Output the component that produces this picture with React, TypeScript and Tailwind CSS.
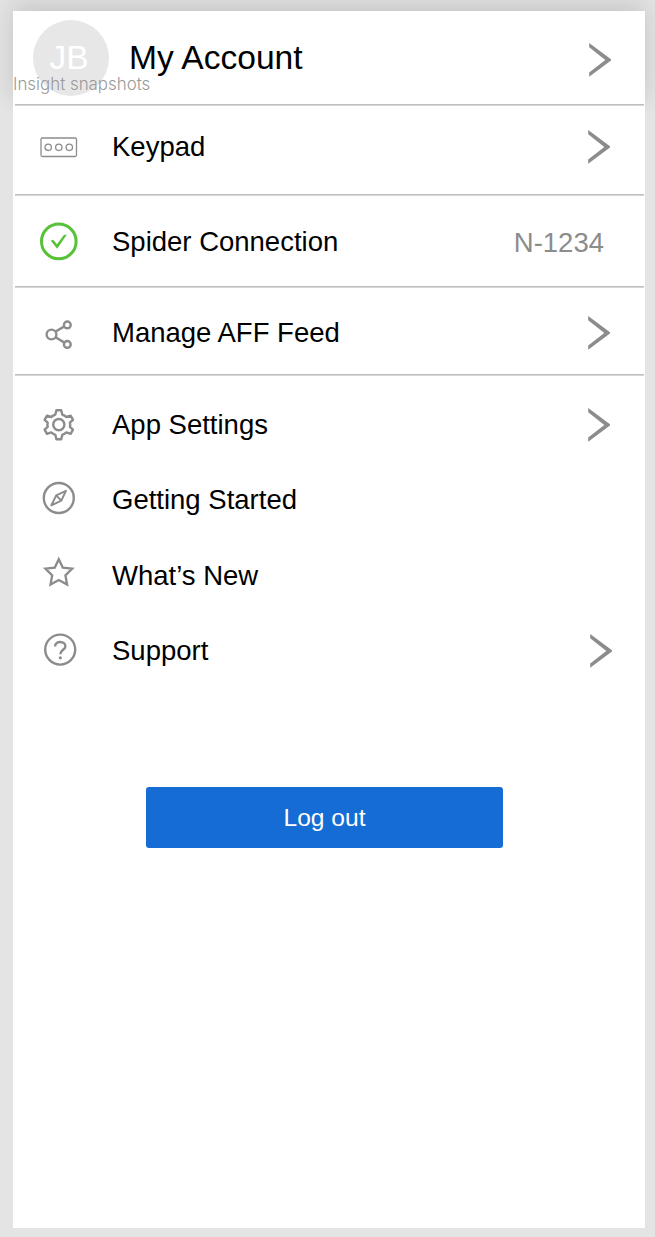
import React from 'react'

const stroke = '#8c8c8c'

function Chevron() {
  return (
    <svg width="24" height="36" viewBox="0 0 24 36" fill="none" className="shrink-0">
      <path d="M1.2 1L23 17.3V18.5L1.2 34.8V30.5L17.3 17.9L1.2 5.3Z" fill={stroke} />
    </svg>
  )
}

function Icon({ children }: { children: React.ReactNode }) {
  return (
    <svg
      width="40"
      height="40"
      viewBox="0 0 40 40"
      fill="none"
      stroke={stroke}
      strokeWidth="2.4"
      className="shrink-0"
    >
      {children}
    </svg>
  )
}

const icons = {
  keypad: (
    <Icon>
      <rect x="2" y="11" width="35.5" height="18.5" rx="1.5" strokeWidth="1.3" />
      <circle cx="9.2" cy="20.3" r="3.2" strokeWidth="1.3" />
      <circle cx="19.8" cy="20.3" r="3.2" strokeWidth="1.3" />
      <circle cx="30.3" cy="20.3" r="3.2" strokeWidth="1.3" />
    </Icon>
  ),
  check: (
    <Icon>
      <circle cx="19.8" cy="20.4" r="17.3" stroke="#57c138" strokeWidth="3" />
      <path d="M11.6 19.4L14.4 18.9L18 23.2L24.8 13.9L27.9 13.6L18.2 27.8Z" fill="#57c138" stroke="none" />
    </Icon>
  ),
  share: (
    <Icon>
      <circle cx="12.5" cy="20.5" r="4.9" />
      <circle cx="28.3" cy="10.9" r="3.4" />
      <circle cx="28.3" cy="30.4" r="3.4" />
      <path d="M16.6 17.5L25.4 12.4M16.6 23.3L25.4 28.6" />
    </Icon>
  ),
  gear: (
    <Icon>
      <circle cx="19.8" cy="19.6" r="5.6" />
      <path
        d="M17.4 5.2H22.2L23.3 9.6Q25.6 10.4 27.4 12L31.6 10.6L34 14.8L30.9 17.6Q31.5 19.6 30.9 21.8L34 24.6L31.6 28.8L27.4 27.4Q25.6 29 23.3 29.8L22.2 34.2H17.4L16.3 29.8Q14 29 12.2 27.4L8 28.8L5.6 24.6L8.7 21.8Q8.1 19.6 8.7 17.6L5.6 14.8L8 10.6L12.2 12Q14 10.4 16.3 9.6Z"
        strokeLinejoin="round"
      />
    </Icon>
  ),
  compass: (
    <Icon>
      <circle cx="19.8" cy="20" r="15" />
      <path d="M26.9 12.9L22.3 22.6L12.4 27.3L17.2 17.4Z" strokeWidth="2" strokeLinejoin="round" />
      <path d="M17.2 17.4L22.3 22.6" strokeWidth="2" />
    </Icon>
  ),
  star: (
    <Icon>
      <path
        d="M19.8 6.2L23.8 14.6L33.2 15.7L26.4 22.3L28.1 31.6L19.8 27L11.5 31.6L13.2 22.3L6.4 15.7L15.8 14.6Z"
        strokeWidth="2.3"
      />
    </Icon>
  ),
  help: (
    <Icon>
      <circle cx="21.2" cy="19.6" r="15" />
      <path d="M16.1 16.4C16.1 13.6 18.3 12 21.2 12C24.2 12 26.4 13.8 26.4 16.4C26.4 19.7 21.3 20 21.3 24.2" />
      <circle cx="21.3" cy="27.8" r="1.6" fill={stroke} stroke="none" />
    </Icon>
  ),
}

type RowProps = {
  icon: React.ReactNode
  label: string
  className: string
  iconClass?: string
  end?: React.ReactNode
}

function Row({ icon, label, className, iconClass = '', end }: RowProps) {
  return (
    <div className={`flex items-center pl-[26px] ${className}`}>
      <div className={iconClass}>{icon}</div>
      <span className="ml-[33px] flex-1 text-[27.5px] leading-8 whitespace-nowrap">{label}</span>
      {end}
    </div>
  )
}

function Divider() {
  return <div className="ml-[2px] mr-[1px] h-[2px] border-t border-b border-t-[#bfbfbf] border-b-[#d6d6d6]" />
}

export default function App() {
  return (
    <div className="h-[1237px] w-[655px] overflow-hidden bg-[#e4e4e4] pt-[11px] pl-[13px] font-['Liberation_Sans',Arial,sans-serif] text-black">
      <div className="flex h-[1217px] w-[632px] flex-col">
        {/* Account header */}
        <header className="relative flex h-[93px] shrink-0 items-center bg-white pr-[33px] pl-5 shadow-[0_-6px_24px_rgba(0,0,0,0.14)]">
          <div className="flex size-[76px] items-center justify-center rounded-full bg-[#e7e7e7] pr-1 text-[33.5px] leading-none text-white">
            JB
          </div>
          <h1 className="ml-5 flex-1 text-[33.6px] leading-10">My Account</h1>
          <div className="pt-[5px]">
            <Chevron />
          </div>
          <span className="absolute top-[63px] left-0 font-['Inter',sans-serif] text-[16.9px] leading-5 font-light whitespace-nowrap text-[#999999]">
            Insight snapshots
          </span>
        </header>

        {/* Menu */}
        <main className="relative flex flex-1 flex-col bg-white">
          <Divider />
          <Row icon={icons.keypad} label="Keypad" className="h-[88px] pr-[34px] pb-[6px]" end={<Chevron />} />
          <Divider />
          <Row
            icon={icons.check}
            label="Spider Connection"
            className="h-[90px] pt-px pr-[41px]"
            iconClass="pb-px"
            end={<span className="pt-[3px] text-[27.5px] leading-8 text-[#8c8c8c]">N-1234</span>}
          />
          <Divider />
          <Row
            icon={icons.share}
            label="Manage AFF Feed"
            className="h-[86px] pt-1 pr-[34px]"
            iconClass="pt-0.5"
            end={<Chevron />}
          />
          <Divider />
          <nav className="pt-[11px]">
            <Row icon={icons.gear} label="App Settings" className="h-[75px] pr-[34px]" end={<Chevron />} />
            <Row icon={icons.compass} label="Getting Started" className="h-[76px]" iconClass="pb-1" />
            <Row icon={icons.star} label="What’s New" className="h-[75px]" iconClass="pb-1.5" />
            <Row icon={icons.help} label="Support" className="h-[76px] pr-[32px]" iconClass="pb-0.5" end={<Chevron />} />
          </nav>
          <button className="mt-[98px] ml-[133px] h-[61px] w-[357px] rounded-[3px] bg-[#156cd4] pt-0.5 text-[24.6px] text-white">
            Log out
          </button>
        </main>
      </div>
    </div>
  )
}
